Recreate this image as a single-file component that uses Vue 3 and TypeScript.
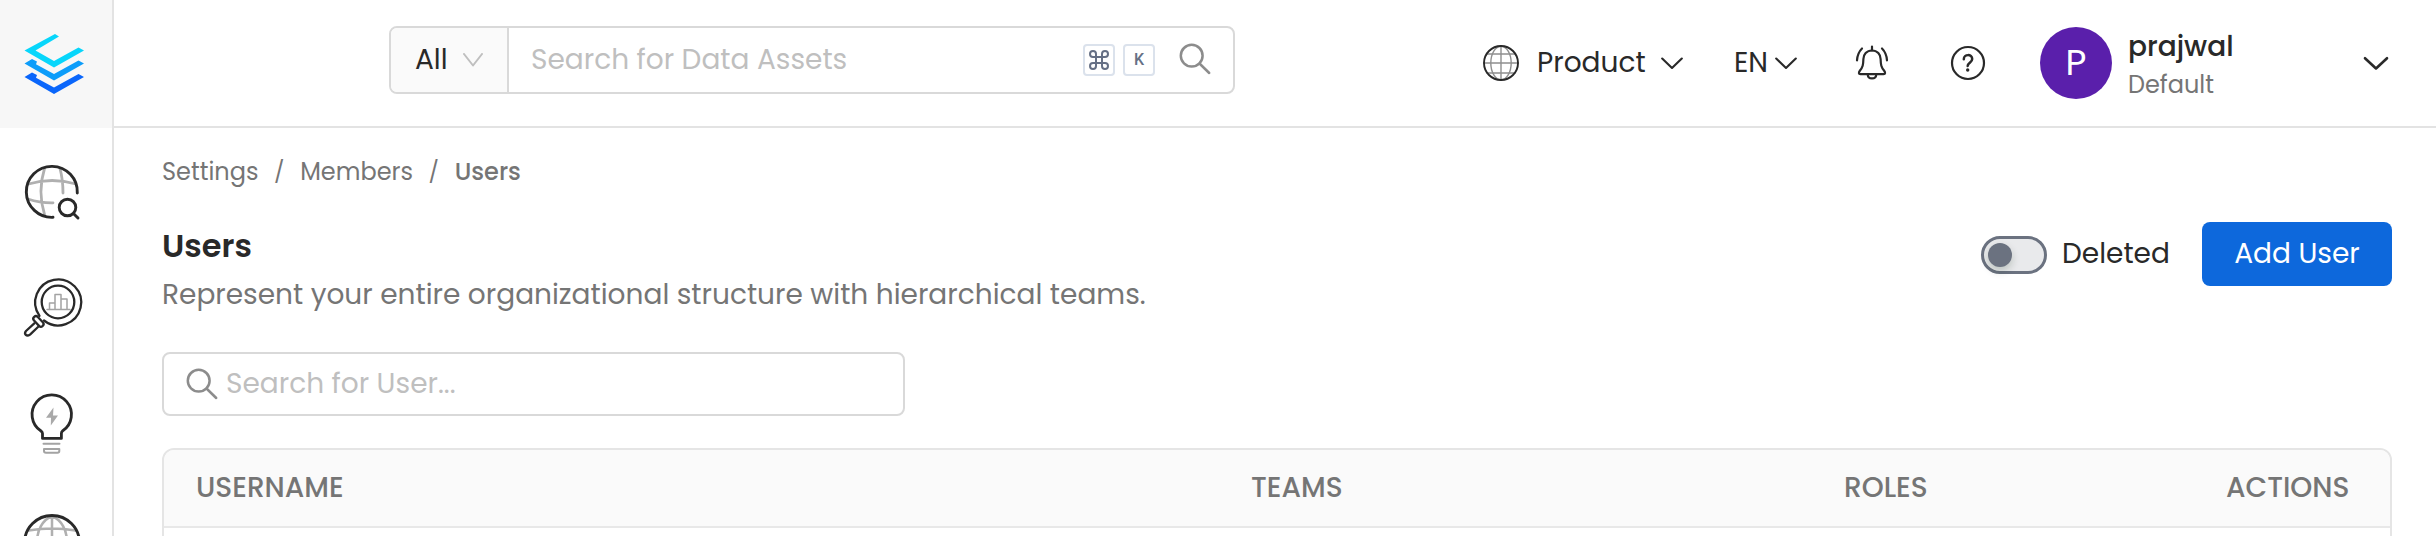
<script setup lang="ts">
interface Column {
  key: string
  label: string
}

const columns: Column[] = [
  { key: 'username', label: 'USERNAME' },
  { key: 'teams', label: 'TEAMS' },
  { key: 'roles', label: 'ROLES' },
  { key: 'actions', label: 'ACTIONS' },
]

const trail: string[] = ['Settings', 'Members', 'Users']
</script>

<template>
  <div class="app">
    <aside class="sidebar">
      <div class="brand">
        <svg class="logo" viewBox="24 34 60 60">
          <polygon fill="#07d6fb" points="55,34 59,36.5 35.5,50.5 54,61 78.5,47.5 84,50.5 54,67.5 24.5,50.5" />
          <polygon fill="#0d9dfa" points="24.5,63.5 32,59 37,61.5 36,64.2 54,74 78.5,60.5 84,63.5 54,80.5" />
          <polygon fill="#0a66fb" points="24.5,77 32,72.5 37,75 36,77.7 54,87.5 78.5,74 84,77 54,94" />
        </svg>
      </div>
      <svg class="nav-icon explore" viewBox="22 162 60 60">
        <g class="faint" stroke-width="2.8">
          <path d="M44.5 168.5C40 183 40 200 44.5 214.500M60 168.500C62 176 63 184 63 193M28.500 184Q52 177 76 184M28 199Q40 203 53 202.800" />
        </g>
        <path class="ink" stroke-width="2.9" d="M77.300 193A25.500 25.500 0 1 0 53 217.300" />
        <g class="ink" stroke-width="2.9">
          <circle cx="67.500" cy="207.500" r="8.300" />
          <path d="M73.700 213.700L78 218" />
        </g>
      </svg>
      <svg class="nav-icon quality" viewBox="22 276 64 62">
        <g class="faint dark" stroke-width="1.500">
          <path d="M47 309.500H70M49.500 309.500V303H55M55 309.500V294.500H61V309.500M61 299H67V309.500" />
        </g>
        <g class="ink" stroke-width="2.300">
          <path d="M39.500 315.800A23 23 0 1 1 44 320.500" />
          <circle cx="58" cy="302" r="16.300" />
          <rect x="32.200" y="318.800" width="12.500" height="5.200" rx="2.600" transform="rotate(47 38.400 321.400)" />
          <path d="M34.300 323.300L26 331C23.600 334 26.500 337 30 334.600L38 327" />
        </g>
      </svg>
      <svg class="nav-icon insight" viewBox="28 392 48 64">
        <path class="ink" stroke-width="2.800" d="M42.500 438.400V433.500Q42.500 432 41 431A19.700 19.700 0 1 1 62.500 431Q61.400 432 61.400 433.500V438.400Z" />
        <path fill="#a9a9a9" d="M53.500 407.500L46 417.800H51L50.800 425.500L58 415.500H53Z" />
        <path class="faint dark" stroke-width="2" d="M43.500 443.800H59.500M44 449H59.300V451Q59.300 452.700 57.500 452.700H46Q44 452.700 44 451Z" />
      </svg>
      <svg class="nav-icon globe" viewBox="22 512 60 60">
        <g class="faint" stroke-width="2.500">
          <path d="M52 516V570M52 516C32 524 32 560 52 570M52 516C72 524 72 560 52 570M28.500 530.500Q52 526.500 75.500 530.500M24 543H80" />
        </g>
        <circle class="ink" stroke-width="2.900" cx="52" cy="543" r="27.500" />
      </svg>
    </aside>

    <div class="page">
      <header class="topbar">
        <div class="global-search">
          <div class="scope">
            <span class="scope-label">All</span>
            <svg class="scope-caret" viewBox="0 0 20 14"><path d="M1 1L10 12.500L19 1" /></svg>
          </div>
          <span class="placeholder">Search for Data Assets</span>
          <span class="keycap">
            <svg viewBox="0 0 24 24"><path d="M15 6v12a3 3 0 1 0 3-3H6a3 3 0 1 0 3 3V6a3 3 0 1 0-3 3h12a3 3 0 1 0-3-3" /></svg>
          </span>
          <span class="keycap">K</span>
          <svg class="lens" viewBox="0 0 32 32"><circle cx="12.700" cy="12.700" r="10.900" /><path d="M20.500 20.500L30.200 30" /></svg>
        </div>

        <div class="domain">
          <svg class="domain-icon" viewBox="0 0 36 36">
            <g stroke="#8f8f8f" stroke-width="1.400">
              <path d="M18 1V35M1 18H35M4 9H32M4 28H32" />
              <ellipse cx="18" cy="18" rx="10.200" ry="16.700" />
            </g>
            <circle cx="18" cy="18" r="17" stroke="#292929" stroke-width="1.900" />
          </svg>
          <span class="domain-label">Product</span>
          <svg class="caret" viewBox="0 0 22 13"><path d="M1.200 1.500L11 11L20.800 1.500" /></svg>
        </div>
        <div class="language">
          <span class="language-label">EN</span>
          <svg class="caret" viewBox="0 0 22 13"><path d="M1.200 1.500L11 11L20.800 1.500" /></svg>
        </div>
        <svg class="bell" viewBox="0 0 34 36">
          <path d="M17 1.500V5.500M7 3.500Q2.500 8 2 15.300M27 3.500Q31.500 8 32 15.300" />
          <path d="M17 5.500C11.500 5.500 8.500 9.500 8.400 14C8.200 20 7.800 22 5 25.500C3.500 27.500 3.500 29.200 5.500 29.200H28.500C30.500 29.200 30.500 27.500 29 25.500C26.200 22 25.800 20 25.600 14C25.500 9.500 22.500 5.500 17 5.500Z" />
          <path d="M12.700 29.500C13 34.700 21 34.700 21.300 29.500" />
        </svg>
        <svg class="help" viewBox="0 0 36 36">
          <circle cx="18" cy="18" r="16" stroke-width="2.200" />
          <path stroke-width="2.500" d="M13.800 14.200C13.800 8.800 22.200 8.800 22.200 14C22.200 17.500 18 17.300 17.700 21" />
          <circle cx="17.700" cy="25" r="1.700" fill="#292929" stroke="none" />
        </svg>
        <div class="profile">
          <span class="avatar">P</span>
          <span class="identity">
            <span class="name">prajwal</span>
            <span class="team">Default</span>
          </span>
          <svg class="profile-caret" viewBox="0 0 26 15"><path d="M2 2.200L13 12.500L24 2.200" /></svg>
        </div>
      </header>

      <main class="content">
        <nav class="breadcrumb">
          <template v-for="(item, i) in trail" :key="item">
            <span v-if="i > 0" class="slash">/</span>
            <span :class="{ current: i === trail.length - 1 }">{{ item }}</span>
          </template>
        </nav>

        <section class="heading">
          <div class="titles">
            <h1>Users</h1>
            <p>Represent your entire organizational structure with hierarchical teams.</p>
          </div>
          <div class="tools">
            <span class="switch"><span class="knob"></span></span>
            <span class="switch-label">Deleted</span>
            <button class="add" type="button">Add User</button>
          </div>
        </section>

        <div class="user-search">
          <svg class="lens" viewBox="0 0 32 32"><circle cx="12.700" cy="12.700" r="10.900" /><path d="M20.500 20.500L30.200 30" /></svg>
          <span>Search for User...</span>
        </div>

        <div class="table">
          <div class="table-head">
            <span v-for="col in columns" :key="col.key" class="th">{{ col.label }}</span>
          </div>
        </div>
      </main>
    </div>
  </div>
</template>

<style>
body {
  overflow: hidden;
  background: #fff;
}
</style>

<style scoped>
* {
  box-sizing: border-box;
}

.app {
  display: flex;
  width: 2436px;
  height: 536px;
  overflow: hidden;
  background: #fff;
  color: #292929;
  font-family: Poppins, Inter, sans-serif;
  font-size: 28px;
  line-height: 42px;
  white-space: nowrap;
}

svg {
  display: block;
  flex: none;
  fill: none;
  stroke-linecap: round;
  stroke-linejoin: round;
}

/* Sidebar */
.sidebar {
  flex: none;
  width: 114px;
  height: 536px;
  overflow: hidden;
  border-right: 2px solid #e3e3e3;
}
.brand {
  height: 128px;
  padding: 34px 0 0 24px;
  background: #f7f7f7;
}
.logo {
  width: 60px;
  height: 60px;
}
.nav-icon {
  margin-left: 22px;
}
.ink {
  stroke: #292929;
}
.faint {
  stroke: #b0b0b0;
}
.faint.dark {
  stroke: #a3a3a3;
}
.explore {
  width: 60px;
  height: 60px;
  margin-top: 34px;
}
.quality {
  width: 64px;
  height: 62px;
  margin-top: 54px;
}
.insight {
  width: 48px;
  height: 64px;
  margin: 54px 0 0 28px;
}
.globe {
  width: 60px;
  height: 60px;
  margin-top: 56px;
}

/* Top bar */
.page {
  flex: 1;
  min-width: 0;
}
.topbar {
  display: flex;
  align-items: center;
  height: 128px;
  padding-left: 275px;
  border-bottom: 2px solid #e3e3e3;
}
.global-search {
  display: flex;
  align-items: center;
  align-self: flex-start;
  width: 846px;
  height: 68px;
  margin-top: 26px;
  border: 2px solid #d9d9d9;
  border-radius: 8px;
}
.scope {
  display: flex;
  align-items: center;
  width: 118px;
  height: 64px;
  padding-left: 24px;
  border-right: 2px solid #d9d9d9;
  border-radius: 6px 0 0 6px;
  background: #fafafa;
}
.scope-label {
  width: 48px;
}
.scope-caret {
  width: 20px;
  height: 14px;
  stroke: #bfbfbf;
  stroke-width: 2;
}
.placeholder {
  flex: 1;
  padding-left: 22px;
  color: #bfbfbf;
}
.keycap {
  display: flex;
  align-items: center;
  justify-content: center;
  width: 32px;
  height: 32px;
  margin-right: 8px;
  border: 2px solid #dbe2ec;
  border-radius: 4px;
  color: #667085;
  font: 500 16px/28px Roboto, sans-serif;
}
.keycap svg {
  width: 24px;
  height: 24px;
  stroke: #667085;
  stroke-width: 2;
}
.lens {
  width: 32px;
  height: 32px;
  stroke: #8c8c8c;
  stroke-width: 2.5;
}
.global-search .lens {
  margin: 0 22px 2px 16px;
}
.domain,
.language,
.profile {
  display: flex;
  align-items: center;
}
.domain {
  margin-left: 248px;
}
.domain-icon {
  width: 36px;
  height: 36px;
}
.domain-label {
  width: 124px;
  margin-left: 18px;
}
.caret {
  width: 22px;
  height: 13px;
  stroke: #292929;
  stroke-width: 2.1;
}
.language {
  margin-left: 51px;
}
.language-label {
  width: 41px;
}
.bell {
  width: 34px;
  height: 36px;
  margin-left: 58px;
  stroke: #292929;
  stroke-width: 2.2;
}
.help {
  width: 36px;
  height: 36px;
  margin-left: 61px;
  stroke: #292929;
}
.profile {
  margin-left: 54px;
}
.avatar {
  width: 72px;
  height: 72px;
  border-radius: 50%;
  background: #5a1fab;
  color: #fff;
  font-size: 36px;
  line-height: 72px;
  text-align: center;
}
.identity {
  display: flex;
  flex-direction: column;
  width: 235px;
  margin-left: 16px;
  padding-top: 1px;
}
.name {
  font-weight: 500;
}
.team {
  color: #757575;
  font-size: 24px;
  line-height: 33px;
}
.profile-caret {
  width: 26px;
  height: 15px;
  stroke: #292929;
  stroke-width: 2.6;
}

/* Content */
.content {
  padding: 26px 44px 0 48px;
}
.breadcrumb {
  display: flex;
  height: 36px;
  color: #757575;
  font-size: 24px;
  line-height: 36px;
}
.slash {
  width: 41.7px;
  font-size: 22px;
  text-align: center;
}
.current {
  font-weight: 500;
}
.heading {
  display: flex;
  justify-content: space-between;
  align-items: flex-start;
  height: 162px;
  padding-top: 32px;
}
h1 {
  margin: 0;
  font-size: 32px;
  font-weight: 600;
  line-height: 48px;
}
p {
  margin: 4px 0 0;
  color: #757575;
}
.tools {
  display: flex;
  align-items: center;
}
.switch {
  width: 66px;
  height: 38px;
  margin-top: 2px;
  padding: 4px;
  border: 3px solid #6b7280;
  border-radius: 19px;
  background: #e9eaec;
}
.knob {
  display: block;
  width: 24px;
  height: 24px;
  border-radius: 50%;
  background: #6b7280;
  box-shadow: 0 4px 8px rgba(0, 35, 11, 0.2);
}
.switch-label {
  width: 140px;
  margin-left: 15px;
}
.add {
  width: 190px;
  height: 64px;
  padding: 0;
  border: 0;
  border-radius: 8px;
  background: #0d68dc;
  color: #fff;
  font: inherit;
}
.user-search {
  display: flex;
  align-items: center;
  width: 743px;
  height: 64px;
  padding-left: 22px;
  border: 2px solid #d9d9d9;
  border-radius: 8px;
  color: #bfbfbf;
}
.user-search .lens {
  margin-right: 8px;
}
.table {
  height: 200px;
  margin-top: 32px;
  border: 2px solid #e5e5e5;
  border-radius: 12px;
  overflow: hidden;
}
.table-head {
  display: grid;
  grid-template-columns: 1055px 593px 382px 196px;
  align-items: center;
  height: 78px;
  border-bottom: 2px solid #e8e8e8;
  background: #fafafa;
  color: #757575;
  font-weight: 500;
}
.th {
  padding-left: 32px;
}
</style>
